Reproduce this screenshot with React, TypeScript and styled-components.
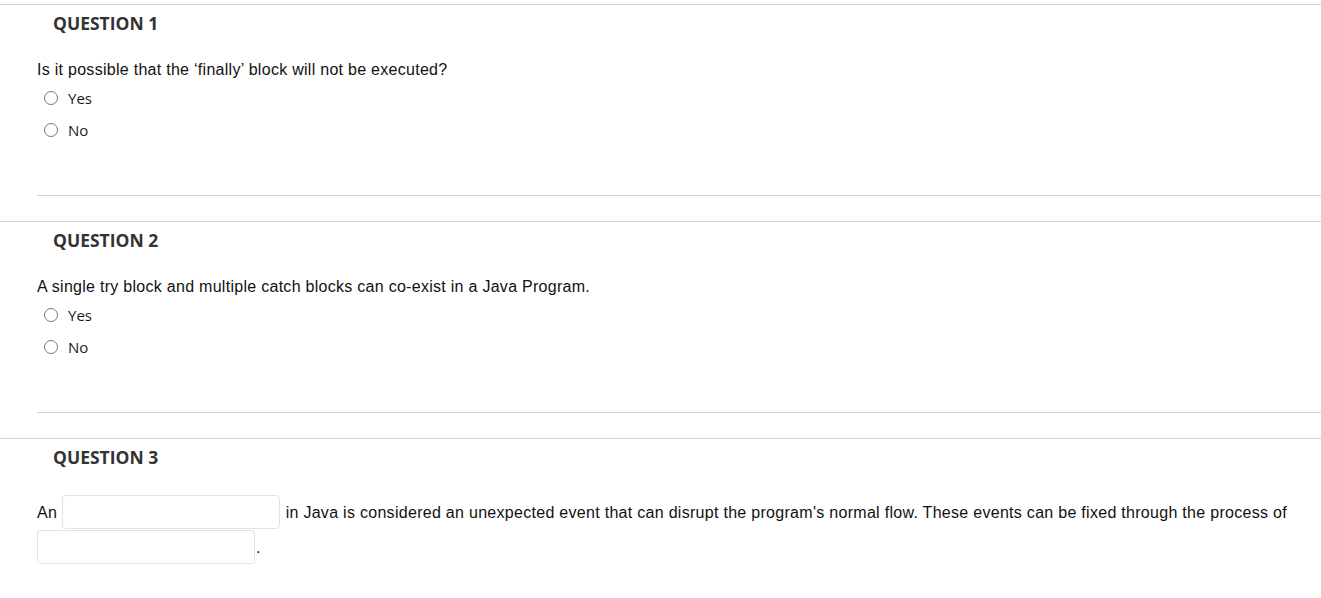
import React from "react";
import styled, { createGlobalStyle } from "styled-components";

const Global = createGlobalStyle`
  html, body { margin: 0; padding: 0; background: #fff; }
  body { font-family: "Liberation Sans", Arial, sans-serif; }
`;

const Page = styled.div`
  padding-top: 4px;
  width: 1321px;
`;

const Section = styled.section`
  border-top: 1px solid #d3d3d3;
  margin-bottom: 25px;
`;

const Heading = styled.h2`
  margin: 7px 0 0;
  padding-left: 53px;
  font-family: "Open Sans", sans-serif;
  font-weight: 700;
  font-size: 17.5px;
  line-height: 23px;
  color: #333;
`;

const Body = styled.div<{ $divider: boolean }>`
  margin-left: 37px;
  padding-top: 25px;
  padding-bottom: ${(p) => (p.$divider ? "49px" : "0")};
  border-bottom: ${(p) => (p.$divider ? "1px solid #d3d3d3" : "none")};
`;

const Prompt = styled.p`
  margin: 0;
  font-family: "Liberation Sans", Arial, sans-serif;
  font-size: 16px;
  letter-spacing: 0.28px;
  line-height: 20px;
  color: #111;
`;

const Options = styled.div`
  display: flex;
  flex-direction: column;
  margin-top: 2px;
`;

const Option = styled.label`
  display: flex;
  align-items: center;
  height: 32px;
  padding-left: 7px;
  font-family: "Open Sans", sans-serif;
  font-size: 15px;
  color: #1a1a1a;
`;

const Radio = styled.input.attrs({ type: "radio" })`
  appearance: none;
  width: 14px;
  height: 14px;
  margin: 0 10px 0 0;
  border: 1px solid #767676;
  border-radius: 50%;
  background: #fff;
  box-sizing: border-box;
`;

const Fill = styled.p`
  margin: 1px 0 0;
  font-family: "Liberation Sans", Arial, sans-serif;
  font-size: 16px;
  letter-spacing: 0.29px;
  line-height: 35px;
  color: #111;
`;

const Blank = styled.input.attrs({ type: "text" })`
  display: inline-block;
  box-sizing: border-box;
  width: 218px;
  height: 34px;
  margin: 0 1px 0 0;
  padding: 0;
  border: 1px solid #e2e2e2;
  border-radius: 4px;
  background: #fff;
  vertical-align: top;
  outline: none;
`;

const YesNo = ({ name }: { name: string }) => (
  <Options>
    <Option>
      <Radio name={name} />
      Yes
    </Option>
    <Option>
      <Radio name={name} />
      No
    </Option>
  </Options>
);

export default function App() {
  return (
    <>
      <Global />
      <Page>
        <Section>
          <Heading>QUESTION 1</Heading>
          <Body $divider>
            <Prompt>Is it possible that the ‘finally’ block will not be executed?</Prompt>
            <YesNo name="q1" />
          </Body>
        </Section>
        <Section>
          <Heading>QUESTION 2</Heading>
          <Body $divider>
            <Prompt>A single try block and multiple catch blocks can co-exist in a Java Program.</Prompt>
            <YesNo name="q2" />
          </Body>
        </Section>
        <Section>
          <Heading>QUESTION 3</Heading>
          <Body $divider={false}>
            <Fill>
              An <Blank /> in Java is considered an unexpected event that can disrupt the program's normal flow. These events can be fixed through the process of <Blank />.
            </Fill>
          </Body>
        </Section>
      </Page>
    </>
  );
}
